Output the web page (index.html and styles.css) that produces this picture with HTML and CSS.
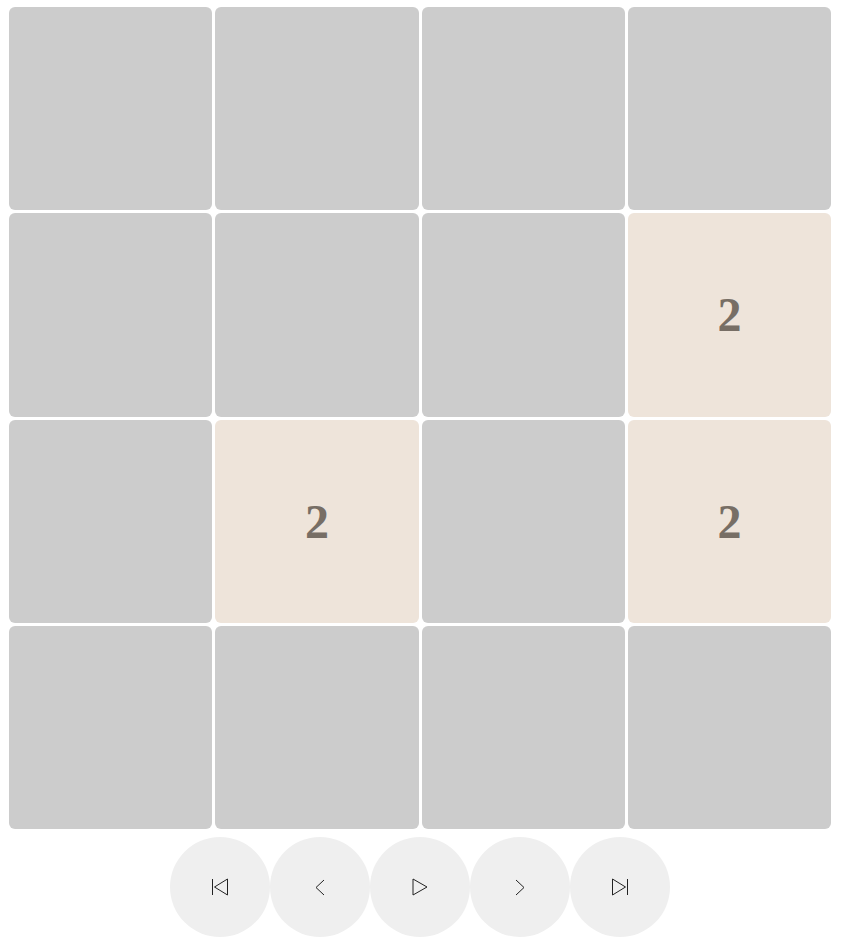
FILE: index.html
```html
<!DOCTYPE html>
<html lang="en">
<head>
    <meta charset="UTF-8">
    <meta name="viewport" content="width=device-width, initial-scale=1.0">
    <title>2048 Replay</title>
    <link rel="stylesheet" href="styles.css">
</head>
<body>
    <div class="board">
        <div class="cell"><div class="tile"></div></div>
        <div class="cell"><div class="tile"></div></div>
        <div class="cell"><div class="tile"></div></div>
        <div class="cell"><div class="tile"></div></div>

        <div class="cell"><div class="tile"></div></div>
        <div class="cell"><div class="tile"></div></div>
        <div class="cell"><div class="tile"></div></div>
        <div class="cell"><div class="tile tile-2">2</div></div>

        <div class="cell"><div class="tile"></div></div>
        <div class="cell"><div class="tile tile-2">2</div></div>
        <div class="cell"><div class="tile"></div></div>
        <div class="cell"><div class="tile tile-2">2</div></div>

        <div class="cell"><div class="tile"></div></div>
        <div class="cell"><div class="tile"></div></div>
        <div class="cell"><div class="tile"></div></div>
        <div class="cell"><div class="tile"></div></div>
    </div>

    <div class="controls">
        <button class="ctrl" title="First">
            <svg viewBox="0 0 24 24" width="24" height="24">
                <polygon points="19.5 4 6.5 12 19.5 20"/>
                <line x1="4.5" y1="4" x2="4.5" y2="20"/>
            </svg>
        </button>
        <button class="ctrl" title="Previous">
            <svg viewBox="0 0 24 24" width="24" height="24">
                <polyline points="16 5 8 12.5 16 20"/>
            </svg>
        </button>
        <button class="ctrl" title="Play">
            <svg viewBox="0 0 24 24" width="24" height="24">
                <polygon points="5 4 19 12 5 20"/>
            </svg>
        </button>
        <button class="ctrl" title="Next">
            <svg viewBox="0 0 24 24" width="24" height="24">
                <polyline points="8 5 16 12.5 8 20"/>
            </svg>
        </button>
        <button class="ctrl" title="Last">
            <svg viewBox="0 0 24 24" width="24" height="24">
                <polygon points="4.5 4 17.5 12 4.5 20"/>
                <line x1="19.5" y1="4" x2="19.5" y2="20"/>
            </svg>
        </button>
    </div>
</body>
</html>
```

FILE: styles.css
```css
body {
    margin: 0;
    padding: 5.5px 8.5px 0 7.5px;
    background-color: #fff;
    font-family: "Liberation Serif", serif;
}
.board {
    display: grid;
    grid-template-columns: repeat(4, 1fr);
}
.cell {
    aspect-ratio: 1 / 1;
    padding: 1.5px;
    box-sizing: border-box;
}
.tile {
    width: 100%;
    height: 100%;
    background-color: #ccc;
    border-radius: 6px;
    display: flex;
    align-items: center;
    justify-content: center;
    font-size: 48px;
    font-weight: bold;
    color: #776e65;
}
.tile-2 {
    background-color: #eee4da;
}
.controls {
    display: flex;
    justify-content: center;
    margin-top: 6.5px;
}
.ctrl {
    width: 100px;
    height: 100px;
    border: none;
    border-radius: 50%;
    background-color: #efefef;
    padding: 0;
    display: flex;
    align-items: center;
    justify-content: center;
    cursor: pointer;
}
.ctrl svg {
    fill: none;
    stroke: #222;
    stroke-width: 1;
}
```
